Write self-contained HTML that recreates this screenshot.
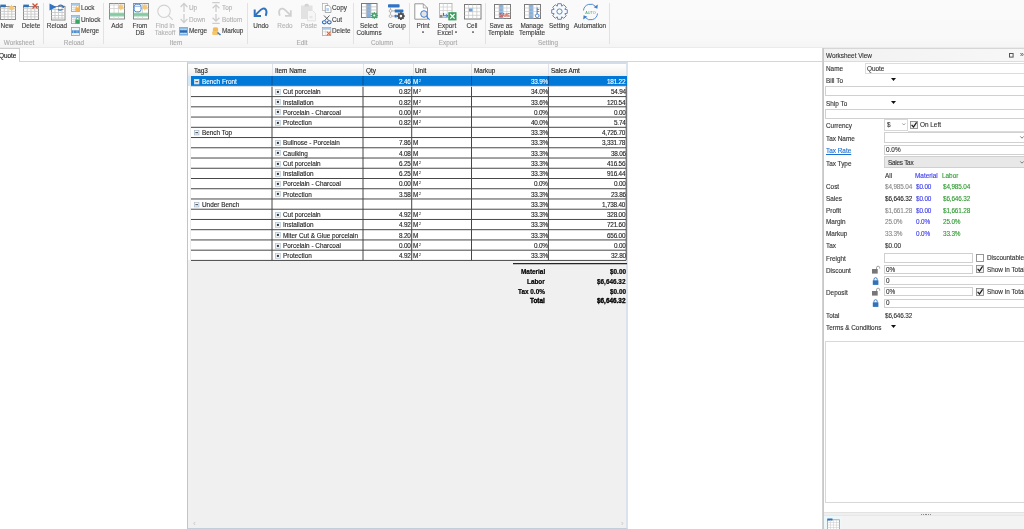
<!DOCTYPE html>
<html><head><meta charset="utf-8"><style>
html,body{margin:0;padding:0;width:1024px;height:529px;overflow:hidden;background:#fff;position:relative;font-family:"Liberation Sans",sans-serif;}
.a{position:absolute;}
.t{position:absolute;white-space:nowrap;will-change:transform;-webkit-text-stroke:0.12px currentColor;line-height:10px;height:10px;font-family:"Liberation Sans",sans-serif;}
sup{font-size:4.3px;vertical-align:0;position:relative;top:-1.8px;margin-left:0.3px;-webkit-text-stroke:0;}
svg{overflow:visible;}
</style></head><body>
<div class="a " style="left:0px;top:0px;width:1024px;height:47px;background:linear-gradient(#fafafa,#f9f9f9 80%,#f4f4f4);"></div>
<div class="a " style="left:0px;top:47px;width:1024px;height:1px;background:#ebebeb;"></div>
<div class="a " style="left:43px;top:3px;width:1px;height:41px;background:#e2e2e2;"></div>
<div class="a " style="left:103px;top:3px;width:1px;height:41px;background:#e2e2e2;"></div>
<div class="a " style="left:247px;top:3px;width:1px;height:41px;background:#e2e2e2;"></div>
<div class="a " style="left:353px;top:3px;width:1px;height:41px;background:#e2e2e2;"></div>
<div class="a " style="left:409px;top:3px;width:1px;height:41px;background:#e2e2e2;"></div>
<div class="a " style="left:485px;top:3px;width:1px;height:41px;background:#e2e2e2;"></div>
<div class="a " style="left:609px;top:3px;width:1px;height:41px;background:#e2e2e2;"></div>
<svg class="a" style="left:-0.5px;top:4.3px" width="17" height="17" viewBox="0 0 17 17"><rect x="0.5" y="2.5" width="15" height="13" fill="#fff" stroke="#8c8c8c" stroke-width="1"/><line x1="4.25" y1="2.5" x2="4.25" y2="15.5" stroke="#c8c8c8" stroke-width="0.9"/><line x1="8" y1="2.5" x2="8" y2="15.5" stroke="#c8c8c8" stroke-width="0.9"/><line x1="11.75" y1="2.5" x2="11.75" y2="15.5" stroke="#c8c8c8" stroke-width="0.9"/><line x1="0.5" y1="4.7" x2="15.5" y2="4.7" stroke="#c8c8c8" stroke-width="0.9"/><line x1="0.5" y1="7.4" x2="15.5" y2="7.4" stroke="#c8c8c8" stroke-width="0.9"/><line x1="0.5" y1="10.1" x2="15.5" y2="10.1" stroke="#c8c8c8" stroke-width="0.9"/><line x1="0.5" y1="12.8" x2="15.5" y2="12.8" stroke="#c8c8c8" stroke-width="0.9"/><rect x="0.3" y="0.6" width="5.6" height="2.6" fill="#2f70b8"/><g transform="translate(11.5 4)"><circle r="2.2" fill="#f3c777"/><path d="M0 -3.2v6.4M-3.2 0h6.4M-2.3 -2.3l4.6 4.6M2.3 -2.3l-4.6 4.6" stroke="#f3c777" stroke-width="0.9"/></g></svg>
<div class="t" style="left:-93px;width:200px;text-align:center;top:20.5px;color:#3c3c3c;font-size:6.4px;">New</div>
<svg class="a" style="left:22.5px;top:4.3px" width="17" height="17" viewBox="0 0 17 17"><rect x="0.5" y="2.5" width="15" height="13" fill="#fff" stroke="#8c8c8c" stroke-width="1"/><line x1="4.25" y1="2.5" x2="4.25" y2="15.5" stroke="#c8c8c8" stroke-width="0.9"/><line x1="8" y1="2.5" x2="8" y2="15.5" stroke="#c8c8c8" stroke-width="0.9"/><line x1="11.75" y1="2.5" x2="11.75" y2="15.5" stroke="#c8c8c8" stroke-width="0.9"/><line x1="0.5" y1="4.7" x2="15.5" y2="4.7" stroke="#c8c8c8" stroke-width="0.9"/><line x1="0.5" y1="7.4" x2="15.5" y2="7.4" stroke="#c8c8c8" stroke-width="0.9"/><line x1="0.5" y1="10.1" x2="15.5" y2="10.1" stroke="#c8c8c8" stroke-width="0.9"/><line x1="0.5" y1="12.8" x2="15.5" y2="12.8" stroke="#c8c8c8" stroke-width="0.9"/><rect x="0.3" y="0.6" width="5.6" height="2.6" fill="#2f70b8"/><path d="M9.5 -0.5l5 5M14.5 -0.5l-5 5" stroke="#dc4b30" stroke-width="1.3"/></svg>
<div class="t" style="left:-69.3px;width:200px;text-align:center;top:20.5px;color:#3c3c3c;font-size:6.4px;">Delete</div>
<div class="t" style="left:-81px;width:200px;text-align:center;top:37.5px;color:#ababab;font-size:6.4px;">Worksheet</div>
<svg class="a" style="left:51px;top:5.5px" width="15" height="15" viewBox="0 0 15 15"><rect x="0.5" y="0.5" width="13.5" height="13.5" fill="#fff" stroke="#8c8c8c" stroke-width="1"/><line x1="4" y1="0.5" x2="4" y2="14.0" stroke="#c8c8c8" stroke-width="0.9"/><line x1="7.5" y1="0.5" x2="7.5" y2="14.0" stroke="#c8c8c8" stroke-width="0.9"/><line x1="11" y1="0.5" x2="11" y2="14.0" stroke="#c8c8c8" stroke-width="0.9"/><line x1="0.5" y1="3.5" x2="14.0" y2="3.5" stroke="#c8c8c8" stroke-width="0.9"/><line x1="0.5" y1="6.5" x2="14.0" y2="6.5" stroke="#c8c8c8" stroke-width="0.9"/><line x1="0.5" y1="9.5" x2="14.0" y2="9.5" stroke="#c8c8c8" stroke-width="0.9"/><line x1="0.5" y1="12" x2="14.0" y2="12" stroke="#c8c8c8" stroke-width="0.9"/></svg>
<svg class="a" style="left:48.5px;top:3.3px" width="16" height="9" viewBox="0 0 16 9"><path d="M0.5 0.5L7.5 4L0.5 7.5z" fill="#2f73c4"/><path d="M9 3.5a3 2.6 0 0 1 5.5 0.5" stroke="#2f73c4" stroke-width="1.2" fill="none"/><path d="M15.3 2.5l-0.5 2.8-2.4-1.2z" fill="#2f73c4"/><path d="M13.5 6a3 2.6 0 0 1-4.5 0.5" stroke="#2f73c4" stroke-width="1.1" fill="none"/></svg>
<div class="t" style="left:-42.8px;width:200px;text-align:center;top:20.5px;color:#3c3c3c;font-size:6.4px;">Reload</div>
<svg class="a" style="left:70.8px;top:2.7px" width="9" height="9" viewBox="0 0 9 9"><rect x="0.5" y="0.5" width="8" height="8" fill="#fff" stroke="#999" stroke-width="0.8"/><rect x="0.5" y="0.5" width="8" height="2.2" fill="#a8c8e8"/><path d="M0.5 4.5h8M0.5 6.5h8M3 2.7v6M5.5 2.7v6" stroke="#ccc" stroke-width="0.6"/><rect x="4.3" y="4.6" width="4.2" height="4" fill="#f0b45a"/><path d="M5.2 4.6v-1a1.2 1.2 0 0 1 2.4 0v1" stroke="#f0b45a" stroke-width="0.7" fill="none"/></svg>
<div class="t" style="left:80.5px;top:2.5999999999999996px;color:#3c3c3c;font-size:6.4px;">Lock</div>
<svg class="a" style="left:70.8px;top:14.7px" width="9" height="9" viewBox="0 0 9 9"><rect x="0.5" y="0.5" width="8" height="8" fill="#fff" stroke="#999" stroke-width="0.8"/><rect x="0.5" y="0.5" width="8" height="2.2" fill="#a8c8e8"/><path d="M0.5 4.5h8M0.5 6.5h8M3 2.7v6M5.5 2.7v6" stroke="#ccc" stroke-width="0.6"/><rect x="4.3" y="4.6" width="4.2" height="4" fill="#3aa564"/><path d="M5.2 4.6v-1a1.2 1.2 0 0 1 2.4 0" stroke="#3aa564" stroke-width="0.7" fill="none"/></svg>
<div class="t" style="left:80.5px;top:14.5px;color:#3c3c3c;font-size:6.4px;">Unlock</div>
<svg class="a" style="left:70.8px;top:26.5px" width="9" height="9" viewBox="0 0 9 9"><rect x="0.5" y="0.5" width="8" height="8" fill="#f4f4f4" stroke="#999" stroke-width="0.8"/><rect x="0.8" y="3.3" width="7.5" height="2.8" fill="#4f8fd0"/><path d="M2.5 3.3v5M6 3.3v5" stroke="#ddd" stroke-width="0.5"/></svg>
<div class="t" style="left:80.5px;top:25.9px;color:#3c3c3c;font-size:6.4px;">Merge</div>
<div class="t" style="left:-25.700000000000003px;width:200px;text-align:center;top:37.5px;color:#ababab;font-size:6.4px;">Reload</div>
<svg class="a" style="left:109px;top:3.3px" width="17" height="17" viewBox="0 0 17 17"><rect x="0.5" y="0.5" width="15" height="15.5" fill="#fff" stroke="#8c8c8c"/><path d="M5 0.5v9.5M9.5 0.5v9.5M0.5 2h15M0.5 5.5h15" stroke="#d0d0d0" stroke-width="0.8"/><rect x="1" y="9.7" width="14" height="3.8" fill="#8fd1a9"/><path d="M0.5 11.6h15" stroke="#7cc199" stroke-width="0.6"/><path d="M5 13.5v2.5M9.5 13.5v2.5" stroke="#d0d0d0" stroke-width="0.8"/><g transform="translate(11.8 4.3)"><circle r="2.3" fill="#f5c67a"/><path d="M0 -3.2v6.4M-3.2 0h6.4M-2.2 -2.2l4.4 4.4M2.2 -2.2l-4.4 4.4" stroke="#f5c67a" stroke-width="0.8"/></g></svg>
<div class="t" style="left:17px;width:200px;text-align:center;top:20.5px;color:#3c3c3c;font-size:6.4px;">Add</div>
<svg class="a" style="left:133px;top:3.3px" width="17" height="17" viewBox="0 0 17 17"><rect x="0.5" y="0.5" width="15" height="15.5" fill="#fff" stroke="#8c8c8c"/><path d="M5 0.5v9.5M9.5 0.5v9.5M0.5 2h15M0.5 5.5h15" stroke="#d0d0d0" stroke-width="0.8"/><rect x="1" y="9.7" width="14" height="3.8" fill="#8fd1a9"/><path d="M0.5 11.6h15" stroke="#7cc199" stroke-width="0.6"/><path d="M5 13.5v2.5M9.5 13.5v2.5" stroke="#d0d0d0" stroke-width="0.8"/><g transform="translate(11.8 4.3)"><circle r="2.3" fill="#f5c67a"/><path d="M0 -3.2v6.4M-3.2 0h6.4M-2.2 -2.2l4.4 4.4M2.2 -2.2l-4.4 4.4" stroke="#f5c67a" stroke-width="0.8"/></g><rect x="1.2" y="1.3" width="6.8" height="7.5" rx="2.2" fill="#fff" stroke="#3f7fcf" stroke-width="0.9"/><path d="M1.6 3.3h6" stroke="#3f7fcf" stroke-width="0.6"/></svg>
<div class="t" style="left:39.80000000000001px;width:200px;text-align:center;top:20.5px;color:#3c3c3c;font-size:6.4px;">From</div>
<div class="t" style="left:39.80000000000001px;width:200px;text-align:center;top:27.5px;color:#3c3c3c;font-size:6.4px;">DB</div>
<svg class="a" style="left:155px;top:3px" width="19" height="18" viewBox="0 0 19 18"><circle cx="9" cy="8.3" r="6.2" fill="none" stroke="#d2d2d2" stroke-width="1.1"/><path d="M13.5 12.7l4.2 4.2" stroke="#d2d2d2" stroke-width="1.2"/></svg>
<div class="t" style="left:64.69999999999999px;width:200px;text-align:center;top:20.5px;color:#b4b4b4;font-size:6.4px;">Find in</div>
<div class="t" style="left:64.69999999999999px;width:200px;text-align:center;top:27.5px;color:#b4b4b4;font-size:6.4px;">Takeoff</div>
<svg class="a" style="left:179.5px;top:2.4000000000000004px" width="8" height="10" viewBox="0 0 8 10"><path d="M4 10V1.5M0.6 5L4 1.5L7.4 5" stroke="#cdcdcd" stroke-width="1.25" fill="none"/></svg>
<div class="t" style="left:188.6px;top:2.8px;color:#b4b4b4;font-size:6.4px;">Up</div>
<svg class="a" style="left:179.5px;top:14.399999999999999px" width="8" height="10" viewBox="0 0 8 10"><path d="M4 0V8.5M0.6 5L4 8.5L7.4 5" stroke="#cdcdcd" stroke-width="1.25" fill="none"/></svg>
<div class="t" style="left:188.6px;top:14.8px;color:#b4b4b4;font-size:6.4px;">Down</div>
<svg class="a" style="left:179px;top:26.8px" width="9" height="9" viewBox="0 0 9 9"><rect x="0" y="0" width="9" height="8.5" fill="#7fb2dc"/><path d="M1 2.2h7M1 6.5h7M3 2.5v4M6 2.5v4" stroke="#e8f2fa" stroke-width="0.6"/><rect x="1" y="3.3" width="7" height="2.3" fill="#2b6cb5"/></svg>
<div class="t" style="left:188.6px;top:26.2px;color:#3c3c3c;font-size:6.4px;">Merge</div>
<svg class="a" style="left:212.3px;top:2.4000000000000004px" width="8" height="10" viewBox="0 0 8 10"><path d="M4 10V2.8M0.6 6.3L4 2.8L7.4 6.3M0.3 0.7h7.4" stroke="#cdcdcd" stroke-width="1.25" fill="none"/></svg>
<div class="t" style="left:221.5px;top:2.8px;color:#b4b4b4;font-size:6.4px;">Top</div>
<svg class="a" style="left:212.3px;top:14.399999999999999px" width="8" height="10" viewBox="0 0 8 10"><path d="M4 0V7.2M0.6 3.7L4 7.2L7.4 3.7M0.3 9.3h7.4" stroke="#cdcdcd" stroke-width="1.25" fill="none"/></svg>
<div class="t" style="left:221.5px;top:14.8px;color:#b4b4b4;font-size:6.4px;">Bottom</div>
<svg class="a" style="left:212px;top:27px" width="10" height="9" viewBox="0 0 10 9"><ellipse cx="3.5" cy="1.6" rx="2.6" ry="1.3" fill="#f0bb55"/><rect x="0.9" y="1.6" width="5.2" height="3.2" fill="#f0bb55"/><rect x="0.2" y="4.3" width="6.2" height="3.6" rx="1" fill="#f5c76c"/><path d="M5.5 5.5l3 2.5" stroke="#3a78c4" stroke-width="1.6"/></svg>
<div class="t" style="left:221.5px;top:26.2px;color:#3c3c3c;font-size:6.4px;">Markup</div>
<div class="t" style="left:76px;width:200px;text-align:center;top:37.5px;color:#ababab;font-size:6.4px;">Item</div>
<svg class="a" style="left:250px;top:2px" width="20" height="18" viewBox="0 0 20 18"><path d="M5.2 13.2L9.6 8.9C11.6 6.6 14.2 5.6 15.8 7.6C17.1 9.3 16.6 11.6 15.7 13.8" stroke="#3173bd" stroke-width="1.9" fill="none"/><path d="M4.7 7.6V13.9H11" stroke="#3173bd" stroke-width="2" fill="none" stroke-linejoin="miter"/></svg>
<div class="t" style="left:161px;width:200px;text-align:center;top:20.5px;color:#3c3c3c;font-size:6.4px;">Undo</div>
<svg class="a" style="left:274px;top:2px" width="22" height="18" viewBox="0 0 22 18"><path d="M5.8 13.8C4.9 11.6 4.6 9.3 5.9 7.6C7.5 5.6 10.1 6.6 12.1 8.9L16.3 13.2" stroke="#d0d0d0" stroke-width="1.7" fill="none"/><path d="M16.8 8.2V13.9H11" stroke="#d0d0d0" stroke-width="1.8" fill="none"/></svg>
<div class="t" style="left:184.5px;width:200px;text-align:center;top:20.5px;color:#b4b4b4;font-size:6.4px;">Redo</div>
<svg class="a" style="left:300px;top:3px" width="17" height="18" viewBox="0 0 17 18"><rect x="1" y="2.5" width="11.5" height="13.5" fill="#e2e2e2"/><path d="M4.5 3.5v-1.2a2.2 1.5 0 0 1 4.4 0v1.2z" fill="#d4d4d4"/><path d="M7.5 7.5h5l3 3v7.3h-8z" fill="#f6f6f6" stroke="#dedede" stroke-width="0.8"/><rect x="9.5" y="13" width="3" height="2.2" fill="#e6e6e6"/></svg>
<div class="t" style="left:208.5px;width:200px;text-align:center;top:20.5px;color:#b4b4b4;font-size:6.4px;">Paste</div>
<svg class="a" style="left:322px;top:2.8px" width="10" height="10" viewBox="0 0 10 10"><rect x="0.5" y="0.5" width="4.8" height="7" fill="#fff" stroke="#aaa" stroke-width="0.7"/><path d="M3.3 2.5h3.5l2.2 2.2v4.8h-5.7z" fill="#fff" stroke="#8a8a8a" stroke-width="0.7"/><rect x="4.4" y="5" width="2.6" height="3" fill="#b7d3ef"/></svg>
<div class="t" style="left:332px;top:2.5999999999999996px;color:#3c3c3c;font-size:6.4px;">Copy</div>
<svg class="a" style="left:322px;top:14.5px" width="10" height="10" viewBox="0 0 10 10"><path d="M2 0.5l5 5.2M7.5 0.5L2.5 5.7" stroke="#4c4c4c" stroke-width="0.9"/><ellipse cx="2.3" cy="7.3" rx="1.9" ry="1.6" fill="none" stroke="#2f6fbf" stroke-width="1.1"/><ellipse cx="7.3" cy="7.3" rx="1.9" ry="1.6" fill="none" stroke="#2f6fbf" stroke-width="1.1"/></svg>
<div class="t" style="left:332px;top:14.7px;color:#3c3c3c;font-size:6.4px;">Cut</div>
<svg class="a" style="left:322px;top:26.8px" width="10" height="9" viewBox="0 0 10 9"><rect x="0.5" y="0.5" width="8.3" height="8" fill="#fff" stroke="#999" stroke-width="0.7"/><rect x="0.7" y="0.7" width="8" height="2" fill="#a8c8e8"/><path d="M0.5 4.8h8M3.3 2.7v6" stroke="#ccc" stroke-width="0.6"/><path d="M4.8 4.6l3.8 3.8M8.6 4.6l-3.8 3.8" stroke="#e8622f" stroke-width="1.1"/></svg>
<div class="t" style="left:332px;top:26.2px;color:#3c3c3c;font-size:6.4px;">Delete</div>
<div class="t" style="left:201.5px;width:200px;text-align:center;top:37.5px;color:#ababab;font-size:6.4px;">Edit</div>
<svg class="a" style="left:361px;top:3.3px" width="18" height="17" viewBox="0 0 18 17"><rect x="0.5" y="0.5" width="15.5" height="14" fill="#fff" stroke="#7a7a7a"/><rect x="5.3" y="1" width="4.6" height="13.5" fill="#86b0dc"/><path d="M5.3 1v14M10 1v14M1 3.8h15M1 7h15M1 10.2h15" stroke="#b8b8b8" stroke-width="0.7"/><g transform="translate(13.3 12.5)"><circle r="2.6" fill="#44a36a"/><path d="M0 -3.6v7.2M-3.6 0h7.2M-2.5 -2.5l5 5M2.5 -2.5l-5 5" stroke="#44a36a" stroke-width="1.1"/><circle r="1.1" fill="#fff"/></g></svg>
<div class="t" style="left:269px;width:200px;text-align:center;top:20.5px;color:#3c3c3c;font-size:6.4px;">Select</div>
<div class="t" style="left:269px;width:200px;text-align:center;top:27.5px;color:#3c3c3c;font-size:6.4px;">Columns</div>
<svg class="a" style="left:388px;top:3.5px" width="18" height="17" viewBox="0 0 18 17"><rect x="0" y="0.3" width="11.6" height="3.1" rx="0.7" fill="#2f73c4"/><rect x="6.6" y="5.5" width="8.8" height="2.9" rx="0.7" fill="#2f73c4"/><path d="M2.5 3.4v7.3M3.9 6.9h2.7M3.9 12.1h2.7" stroke="#9a9a9a" stroke-width="0.7"/><circle cx="2.5" cy="6.9" r="1.35" fill="#fff" stroke="#999" stroke-width="0.7"/><circle cx="2.5" cy="12.1" r="1.35" fill="#fff" stroke="#999" stroke-width="0.7"/><rect x="6.6" y="10.8" width="2.2" height="2.7" rx="0.5" fill="#2f73c4"/><g transform="translate(12.9 12.1)"><path d="M3.81 -0.81 L3.81 0.81 L2.68 1.11 L3.27 2.12 L2.12 3.27 L1.11 2.68 L0.81 3.81 L-0.81 3.81 L-1.11 2.68 L-2.12 3.27 L-3.27 2.12 L-2.68 1.11 L-3.81 0.81 L-3.81 -0.81 L-2.68 -1.11 L-3.27 -2.12 L-2.12 -3.27 L-1.11 -2.68 L-0.81 -3.81 L0.81 -3.81 L1.11 -2.68 L2.12 -3.27 L3.27 -2.12 L2.68 -1.11z" fill="#4f4f4f"/><circle r="1.3" fill="#fff"/></g></svg>
<div class="t" style="left:296.5px;width:200px;text-align:center;top:20.5px;color:#3c3c3c;font-size:6.4px;">Group</div>
<div class="t" style="left:282px;width:200px;text-align:center;top:37.5px;color:#ababab;font-size:6.4px;">Column</div>
<svg class="a" style="left:414px;top:3px" width="18" height="18" viewBox="0 0 18 18"><path d="M0.8 0.8h8.5l4.2 4.2v11.2H0.8z" fill="#fff" stroke="#8a8a8a" stroke-width="0.9"/><path d="M9.3 0.8v4.2h4.2" fill="none" stroke="#8a8a8a" stroke-width="0.7"/><circle cx="10" cy="11" r="3.3" fill="#e4e4e4" stroke="#3f7fcf" stroke-width="1"/><path d="M12.4 13.4l3.2 3.4" stroke="#3f7fcf" stroke-width="1.1"/></svg>
<div class="t" style="left:323px;width:200px;text-align:center;top:20.5px;color:#3c3c3c;font-size:6.4px;">Print</div>
<svg class="a" style="left:422.4px;top:31.4px" width="2" height="2" viewBox="0 0 2 2"><circle cx="1" cy="1" r="0.85" fill="#222"/></svg>
<svg class="a" style="left:439px;top:3px" width="18" height="18" viewBox="0 0 18 18"><rect x="0.5" y="0.5" width="12.5" height="14" fill="#fff" stroke="#aaa" stroke-width="0.8"/><path d="M4.3 0.5v14M8.3 0.5v14M0.5 4h12.5M0.5 7.5h12.5M0.5 11h12.5" stroke="#ccc" stroke-width="0.7"/><rect x="1" y="12" width="2.5" height="2.5" fill="#888"/><rect x="9.3" y="9.2" width="8.2" height="8.2" fill="#3a9d5e"/><path d="M11.2 11l4.4 4.6M15.6 11l-4.4 4.6" stroke="#fff" stroke-width="1.2"/><path d="M4.5 10v2.8h4.2M7.2 11.3l1.5 1.5-1.5 1.5" stroke="#2f73c4" stroke-width="1" fill="none"/></svg>
<div class="t" style="left:347px;width:200px;text-align:center;top:20.5px;color:#3c3c3c;font-size:6.4px;">Export</div>
<div class="t" style="left:345.3px;width:200px;text-align:center;top:27.5px;color:#3c3c3c;font-size:6.4px;">Excel</div>
<svg class="a" style="left:454.9px;top:31.4px" width="2" height="2" viewBox="0 0 2 2"><circle cx="1" cy="1" r="0.85" fill="#222"/></svg>
<svg class="a" style="left:463.5px;top:4.3px" width="18" height="16" viewBox="0 0 18 16"><rect x="0.5" y="0.5" width="16.5" height="14.5" fill="#fff" stroke="#7a7a7a"/><path d="M4.6 0.5v14.5M8.7 0.5v14.5M12.8 0.5v14.5M0.5 4.1h16.5M0.5 7.7h16.5M0.5 11.3h16.5" stroke="#c4c4c4" stroke-width="0.7"/><rect x="5" y="4.5" width="3.5" height="3" fill="#6a9fd8"/></svg>
<div class="t" style="left:372px;width:200px;text-align:center;top:20.5px;color:#3c3c3c;font-size:6.4px;">Cell</div>
<svg class="a" style="left:471.5px;top:31.4px" width="2" height="2" viewBox="0 0 2 2"><circle cx="1" cy="1" r="0.85" fill="#222"/></svg>
<div class="t" style="left:348px;width:200px;text-align:center;top:37.5px;color:#ababab;font-size:6.4px;">Export</div>
<svg class="a" style="left:493.5px;top:4.3px" width="17" height="15" viewBox="0 0 17 15"><rect x="0.5" y="0.5" width="16" height="14" fill="#fff" stroke="#7a7a7a"/><rect x="5" y="0.8" width="4.2" height="13.7" fill="#86b0dc"/><path d="M5 0.5v14M9.2 0.5v14M12.8 0.5v14M0.5 4h16M0.5 7.5h16M0.5 11h16" stroke="#c4c4c4" stroke-width="0.6"/><text x="5.2" y="13.2" font-size="4.6" fill="#d8412f" font-family="Liberation Sans" font-weight="bold" textLength="10.8" lengthAdjust="spacingAndGlyphs">SAVE</text></svg>
<div class="t" style="left:401px;width:200px;text-align:center;top:20.5px;color:#3c3c3c;font-size:6.4px;">Save as</div>
<div class="t" style="left:401px;width:200px;text-align:center;top:27.5px;color:#3c3c3c;font-size:6.4px;">Template</div>
<svg class="a" style="left:523.5px;top:4.3px" width="17" height="15" viewBox="0 0 17 15"><rect x="0.5" y="0.5" width="16" height="14" fill="#fff" stroke="#7a7a7a"/><rect x="5" y="0.8" width="4.2" height="13.7" fill="#86b0dc"/><path d="M5 0.5v14M9.2 0.5v14M12.8 0.5v14M0.5 4h16M0.5 7.5h16M0.5 11h16" stroke="#c4c4c4" stroke-width="0.6"/><circle cx="13.2" cy="11.8" r="1.8" fill="#fff" stroke="#3f7fcf" stroke-width="0.9"/><path d="M13.2 10V3.5M13.2 5.5h2M13.2 7.5h1.6" stroke="#3f7fcf" stroke-width="0.9"/></svg>
<div class="t" style="left:431.5px;width:200px;text-align:center;top:20.5px;color:#3c3c3c;font-size:6.4px;">Manage</div>
<div class="t" style="left:431.5px;width:200px;text-align:center;top:27.5px;color:#3c3c3c;font-size:6.4px;">Template</div>
<svg class="a" style="left:551px;top:3.2px" width="17" height="17" viewBox="0 0 17 17"><path d="M6.70 0.71 L10.30 0.71 L10.67 3.12 L10.77 3.16 L12.74 1.72 L15.28 4.26 L13.84 6.23 L13.88 6.33 L16.29 6.70 L16.29 10.30 L13.88 10.67 L13.84 10.77 L15.28 12.74 L12.74 15.28 L10.77 13.84 L10.67 13.88 L10.30 16.29 L6.70 16.29 L6.33 13.88 L6.23 13.84 L4.26 15.28 L1.72 12.74 L3.16 10.77 L3.12 10.67 L0.71 10.30 L0.71 6.70 L3.12 6.33 L3.16 6.23 L1.72 4.26 L4.26 1.72 L6.23 3.16 L6.33 3.12z" fill="none" stroke="#3f7fcf" stroke-width="0.9" stroke-linejoin="round"/><circle cx="8.5" cy="8.5" r="2.6" fill="none" stroke="#3f7fcf" stroke-width="0.9"/></svg>
<div class="t" style="left:459px;width:200px;text-align:center;top:20.5px;color:#3c3c3c;font-size:6.4px;">Setting</div>
<svg class="a" style="left:580.5px;top:2.8px" width="19" height="18" viewBox="0 0 19 18"><path d="M2.5 7.5A7 7 0 0 1 14.8 3.6" stroke="#3f7fcf" stroke-width="0.9" fill="none"/><path d="M16.5 10.5A7 7 0 0 1 4.2 14.4" stroke="#3f7fcf" stroke-width="0.9" fill="none"/><path d="M16.8 1.5l-0.4 4.3-3.7-1.6z" fill="#3f7fcf"/><path d="M2.2 16.5l0.4-4.3 3.7 1.6z" fill="#3f7fcf"/><text x="4.2" y="10.6" font-size="4.4" fill="#44a36a" font-family="Liberation Sans" textLength="10.5" lengthAdjust="spacingAndGlyphs">AUTO</text></svg>
<div class="t" style="left:489.6px;width:200px;text-align:center;top:20.5px;color:#3c3c3c;font-size:6.4px;">Automation</div>
<div class="t" style="left:448px;width:200px;text-align:center;top:37.5px;color:#ababab;font-size:6.4px;">Setting</div>
<div class="a " style="left:0px;top:48px;width:1024px;height:14px;background:#fff;"></div>
<div class="a " style="left:0px;top:48px;width:19.5px;height:1px;background:#d0d0d0;"></div>
<div class="a " style="left:19px;top:48px;width:1px;height:14px;background:#cfcfcf;"></div>
<div class="a " style="left:19px;top:61px;width:803px;height:1px;background:#d6d6d6;"></div>
<div class="t" style="left:-1px;top:50.8px;color:#111;font-size:6.4px;">Quote</div>
<div class="a " style="left:187px;top:62px;width:441px;height:467px;background:#f0f0f0;box-sizing:border-box;border:1px solid #b9c6d4;border-top:2px solid #d3dde8;border-right:2px solid #dae2eb;border-bottom:1px solid #c2ceda;"></div>
<div class="a " style="left:188px;top:64px;width:438px;height:12px;background:linear-gradient(#ffffff,#f6f6f7 55%,#ededee);"></div>
<div class="a " style="left:188px;top:76px;width:3px;height:184px;background:#fff;"></div>
<div class="a " style="left:188px;top:76px;width:3px;height:10px;background:#d2e9f8;"></div>
<div class="a " style="left:190px;top:86px;width:1px;height:174px;background:#ececec;"></div>
<div class="t" style="left:193.8px;top:66.0px;color:#222;font-size:6.4px;">Tag3</div>
<div class="t" style="left:274.8px;top:66.0px;color:#222;font-size:6.4px;">Item Name</div>
<div class="t" style="left:365.8px;top:66.0px;color:#222;font-size:6.4px;">Qty</div>
<div class="t" style="left:414.8px;top:66.0px;color:#222;font-size:6.4px;">Unit</div>
<div class="t" style="left:473.8px;top:66.0px;color:#222;font-size:6.4px;">Markup</div>
<div class="t" style="left:550.8px;top:66.0px;color:#222;font-size:6.4px;">Sales Amt</div>
<div class="a " style="left:272px;top:64px;width:1px;height:12px;background:#dfe3e8;"></div>
<div class="a " style="left:363px;top:64px;width:1px;height:12px;background:#dfe3e8;"></div>
<div class="a " style="left:413px;top:64px;width:1px;height:12px;background:#dfe3e8;"></div>
<div class="a " style="left:471px;top:64px;width:1px;height:12px;background:#dfe3e8;"></div>
<div class="a " style="left:548px;top:64px;width:1px;height:12px;background:#dfe3e8;"></div>
<div class="a " style="left:191px;top:76px;width:435px;height:184px;background:#fff;"></div>
<div class="a " style="left:191px;top:76px;width:436px;height:10px;background:#0078d7;"></div>
<svg class="a" style="left:193.6px;top:79.10000000000001px" width="6" height="6" viewBox="0 0 6 6"><rect x="0.5" y="0.5" width="4.4" height="4.4" fill="#ececec" stroke="#dfe4ea" stroke-width="0.8"/><path d="M1.4 2.7h2.6" stroke="#5a4a30" stroke-width="1"/></svg>
<div class="t" style="left:201.5px;top:77.02000000000001px;color:#fff;font-size:6.4px;">Bench Front</div>
<div class="t" style="right:613.0px;top:77.02000000000001px;color:#fff;font-size:6.4px;letter-spacing:-0.22px;">2.46</div>
<div class="t" style="left:413px;top:77.02000000000001px;color:#fff;font-size:6.4px;">M<sup>2</sup></div>
<div class="t" style="right:476.29999999999995px;top:77.02000000000001px;color:#fff;font-size:6.4px;letter-spacing:-0.22px;">33.9%</div>
<div class="t" style="right:398.4px;top:77.02000000000001px;color:#fff;font-size:6.4px;letter-spacing:-0.22px;">181.22</div>
<svg class="a" style="left:275.3px;top:88.94px" width="6" height="6" viewBox="0 0 6 6"><rect x="0.5" y="0.5" width="4.8" height="4.8" fill="#f2f5f8" stroke="#b4c6d8" stroke-width="0.8"/><rect x="1.9" y="1.9" width="2" height="2" fill="#333"/></svg>
<div class="t" style="left:283px;top:87.26px;color:#1e1e1e;font-size:6.4px;">Cut porcelain</div>
<div class="t" style="right:613.0px;top:87.26px;color:#1e1e1e;font-size:6.4px;letter-spacing:-0.22px;">0.82</div>
<div class="t" style="left:413px;top:87.26px;color:#1e1e1e;font-size:6.4px;">M<sup>2</sup></div>
<div class="t" style="right:476.29999999999995px;top:87.26px;color:#1e1e1e;font-size:6.4px;letter-spacing:-0.22px;">34.0%</div>
<div class="t" style="right:398.4px;top:87.26px;color:#1e1e1e;font-size:6.4px;letter-spacing:-0.22px;">54.94</div>
<svg class="a" style="left:275.3px;top:99.18px" width="6" height="6" viewBox="0 0 6 6"><rect x="0.5" y="0.5" width="4.8" height="4.8" fill="#f2f5f8" stroke="#b4c6d8" stroke-width="0.8"/><rect x="1.9" y="1.9" width="2" height="2" fill="#333"/></svg>
<div class="t" style="left:283px;top:97.5px;color:#1e1e1e;font-size:6.4px;">Installation</div>
<div class="t" style="right:613.0px;top:97.5px;color:#1e1e1e;font-size:6.4px;letter-spacing:-0.22px;">0.82</div>
<div class="t" style="left:413px;top:97.5px;color:#1e1e1e;font-size:6.4px;">M<sup>2</sup></div>
<div class="t" style="right:476.29999999999995px;top:97.5px;color:#1e1e1e;font-size:6.4px;letter-spacing:-0.22px;">33.6%</div>
<div class="t" style="right:398.4px;top:97.5px;color:#1e1e1e;font-size:6.4px;letter-spacing:-0.22px;">120.54</div>
<svg class="a" style="left:275.3px;top:109.42px" width="6" height="6" viewBox="0 0 6 6"><rect x="0.5" y="0.5" width="4.8" height="4.8" fill="#f2f5f8" stroke="#b4c6d8" stroke-width="0.8"/><rect x="1.9" y="1.9" width="2" height="2" fill="#333"/></svg>
<div class="t" style="left:283px;top:107.74000000000001px;color:#1e1e1e;font-size:6.4px;">Porcelain - Charcoal</div>
<div class="t" style="right:613.0px;top:107.74000000000001px;color:#1e1e1e;font-size:6.4px;letter-spacing:-0.22px;">0.00</div>
<div class="t" style="left:413px;top:107.74000000000001px;color:#1e1e1e;font-size:6.4px;">M<sup>2</sup></div>
<div class="t" style="right:476.29999999999995px;top:107.74000000000001px;color:#1e1e1e;font-size:6.4px;letter-spacing:-0.22px;">0.0%</div>
<div class="t" style="right:398.4px;top:107.74000000000001px;color:#1e1e1e;font-size:6.4px;letter-spacing:-0.22px;">0.00</div>
<svg class="a" style="left:275.3px;top:119.66000000000001px" width="6" height="6" viewBox="0 0 6 6"><rect x="0.5" y="0.5" width="4.8" height="4.8" fill="#f2f5f8" stroke="#b4c6d8" stroke-width="0.8"/><rect x="1.9" y="1.9" width="2" height="2" fill="#333"/></svg>
<div class="t" style="left:283px;top:117.98000000000002px;color:#1e1e1e;font-size:6.4px;">Protection</div>
<div class="t" style="right:613.0px;top:117.98000000000002px;color:#1e1e1e;font-size:6.4px;letter-spacing:-0.22px;">0.82</div>
<div class="t" style="left:413px;top:117.98000000000002px;color:#1e1e1e;font-size:6.4px;">M<sup>2</sup></div>
<div class="t" style="right:476.29999999999995px;top:117.98000000000002px;color:#1e1e1e;font-size:6.4px;letter-spacing:-0.22px;">40.0%</div>
<div class="t" style="right:398.4px;top:117.98000000000002px;color:#1e1e1e;font-size:6.4px;letter-spacing:-0.22px;">5.74</div>
<svg class="a" style="left:193.6px;top:130.3px" width="6" height="6" viewBox="0 0 6 6"><rect x="0.5" y="0.5" width="4.4" height="4.4" fill="#f4f6f8" stroke="#a8bccf" stroke-width="0.8"/><path d="M1.4 2.7h2.6" stroke="#3a3a3a" stroke-width="1"/></svg>
<div class="t" style="left:201.5px;top:128.22px;color:#1e1e1e;font-size:6.4px;">Bench Top</div>
<div class="t" style="right:476.29999999999995px;top:128.22px;color:#1e1e1e;font-size:6.4px;letter-spacing:-0.22px;">33.3%</div>
<div class="t" style="right:398.4px;top:128.22px;color:#1e1e1e;font-size:6.4px;letter-spacing:-0.22px;">4,726.70</div>
<svg class="a" style="left:275.3px;top:140.14000000000001px" width="6" height="6" viewBox="0 0 6 6"><rect x="0.5" y="0.5" width="4.8" height="4.8" fill="#f2f5f8" stroke="#b4c6d8" stroke-width="0.8"/><rect x="1.9" y="1.9" width="2" height="2" fill="#333"/></svg>
<div class="t" style="left:283px;top:138.46px;color:#1e1e1e;font-size:6.4px;">Bullnose - Porcelain</div>
<div class="t" style="right:613.0px;top:138.46px;color:#1e1e1e;font-size:6.4px;letter-spacing:-0.22px;">7.86</div>
<div class="t" style="left:413px;top:138.46px;color:#1e1e1e;font-size:6.4px;">M</div>
<div class="t" style="right:476.29999999999995px;top:138.46px;color:#1e1e1e;font-size:6.4px;letter-spacing:-0.22px;">33.3%</div>
<div class="t" style="right:398.4px;top:138.46px;color:#1e1e1e;font-size:6.4px;letter-spacing:-0.22px;">3,331.78</div>
<svg class="a" style="left:275.3px;top:150.38000000000002px" width="6" height="6" viewBox="0 0 6 6"><rect x="0.5" y="0.5" width="4.8" height="4.8" fill="#f2f5f8" stroke="#b4c6d8" stroke-width="0.8"/><rect x="1.9" y="1.9" width="2" height="2" fill="#333"/></svg>
<div class="t" style="left:283px;top:148.7px;color:#1e1e1e;font-size:6.4px;">Caulking</div>
<div class="t" style="right:613.0px;top:148.7px;color:#1e1e1e;font-size:6.4px;letter-spacing:-0.22px;">4.08</div>
<div class="t" style="left:413px;top:148.7px;color:#1e1e1e;font-size:6.4px;">M</div>
<div class="t" style="right:476.29999999999995px;top:148.7px;color:#1e1e1e;font-size:6.4px;letter-spacing:-0.22px;">33.3%</div>
<div class="t" style="right:398.4px;top:148.7px;color:#1e1e1e;font-size:6.4px;letter-spacing:-0.22px;">38.06</div>
<svg class="a" style="left:275.3px;top:160.62px" width="6" height="6" viewBox="0 0 6 6"><rect x="0.5" y="0.5" width="4.8" height="4.8" fill="#f2f5f8" stroke="#b4c6d8" stroke-width="0.8"/><rect x="1.9" y="1.9" width="2" height="2" fill="#333"/></svg>
<div class="t" style="left:283px;top:158.94px;color:#1e1e1e;font-size:6.4px;">Cut porcelain</div>
<div class="t" style="right:613.0px;top:158.94px;color:#1e1e1e;font-size:6.4px;letter-spacing:-0.22px;">6.25</div>
<div class="t" style="left:413px;top:158.94px;color:#1e1e1e;font-size:6.4px;">M<sup>2</sup></div>
<div class="t" style="right:476.29999999999995px;top:158.94px;color:#1e1e1e;font-size:6.4px;letter-spacing:-0.22px;">33.3%</div>
<div class="t" style="right:398.4px;top:158.94px;color:#1e1e1e;font-size:6.4px;letter-spacing:-0.22px;">416.56</div>
<svg class="a" style="left:275.3px;top:170.86px" width="6" height="6" viewBox="0 0 6 6"><rect x="0.5" y="0.5" width="4.8" height="4.8" fill="#f2f5f8" stroke="#b4c6d8" stroke-width="0.8"/><rect x="1.9" y="1.9" width="2" height="2" fill="#333"/></svg>
<div class="t" style="left:283px;top:169.18px;color:#1e1e1e;font-size:6.4px;">Installation</div>
<div class="t" style="right:613.0px;top:169.18px;color:#1e1e1e;font-size:6.4px;letter-spacing:-0.22px;">6.25</div>
<div class="t" style="left:413px;top:169.18px;color:#1e1e1e;font-size:6.4px;">M<sup>2</sup></div>
<div class="t" style="right:476.29999999999995px;top:169.18px;color:#1e1e1e;font-size:6.4px;letter-spacing:-0.22px;">33.3%</div>
<div class="t" style="right:398.4px;top:169.18px;color:#1e1e1e;font-size:6.4px;letter-spacing:-0.22px;">916.44</div>
<svg class="a" style="left:275.3px;top:181.10000000000002px" width="6" height="6" viewBox="0 0 6 6"><rect x="0.5" y="0.5" width="4.8" height="4.8" fill="#f2f5f8" stroke="#b4c6d8" stroke-width="0.8"/><rect x="1.9" y="1.9" width="2" height="2" fill="#333"/></svg>
<div class="t" style="left:283px;top:179.42000000000002px;color:#1e1e1e;font-size:6.4px;">Porcelain - Charcoal</div>
<div class="t" style="right:613.0px;top:179.42000000000002px;color:#1e1e1e;font-size:6.4px;letter-spacing:-0.22px;">0.00</div>
<div class="t" style="left:413px;top:179.42000000000002px;color:#1e1e1e;font-size:6.4px;">M<sup>2</sup></div>
<div class="t" style="right:476.29999999999995px;top:179.42000000000002px;color:#1e1e1e;font-size:6.4px;letter-spacing:-0.22px;">0.0%</div>
<div class="t" style="right:398.4px;top:179.42000000000002px;color:#1e1e1e;font-size:6.4px;letter-spacing:-0.22px;">0.00</div>
<svg class="a" style="left:275.3px;top:191.34000000000003px" width="6" height="6" viewBox="0 0 6 6"><rect x="0.5" y="0.5" width="4.8" height="4.8" fill="#f2f5f8" stroke="#b4c6d8" stroke-width="0.8"/><rect x="1.9" y="1.9" width="2" height="2" fill="#333"/></svg>
<div class="t" style="left:283px;top:189.66000000000003px;color:#1e1e1e;font-size:6.4px;">Protection</div>
<div class="t" style="right:613.0px;top:189.66000000000003px;color:#1e1e1e;font-size:6.4px;letter-spacing:-0.22px;">3.58</div>
<div class="t" style="left:413px;top:189.66000000000003px;color:#1e1e1e;font-size:6.4px;">M<sup>2</sup></div>
<div class="t" style="right:476.29999999999995px;top:189.66000000000003px;color:#1e1e1e;font-size:6.4px;letter-spacing:-0.22px;">33.3%</div>
<div class="t" style="right:398.4px;top:189.66000000000003px;color:#1e1e1e;font-size:6.4px;letter-spacing:-0.22px;">23.86</div>
<svg class="a" style="left:193.6px;top:201.98px" width="6" height="6" viewBox="0 0 6 6"><rect x="0.5" y="0.5" width="4.4" height="4.4" fill="#f4f6f8" stroke="#a8bccf" stroke-width="0.8"/><path d="M1.4 2.7h2.6" stroke="#3a3a3a" stroke-width="1"/></svg>
<div class="t" style="left:201.5px;top:199.9px;color:#1e1e1e;font-size:6.4px;">Under Bench</div>
<div class="t" style="right:476.29999999999995px;top:199.9px;color:#1e1e1e;font-size:6.4px;letter-spacing:-0.22px;">33.3%</div>
<div class="t" style="right:398.4px;top:199.9px;color:#1e1e1e;font-size:6.4px;letter-spacing:-0.22px;">1,738.40</div>
<svg class="a" style="left:275.3px;top:211.82000000000002px" width="6" height="6" viewBox="0 0 6 6"><rect x="0.5" y="0.5" width="4.8" height="4.8" fill="#f2f5f8" stroke="#b4c6d8" stroke-width="0.8"/><rect x="1.9" y="1.9" width="2" height="2" fill="#333"/></svg>
<div class="t" style="left:283px;top:210.14000000000001px;color:#1e1e1e;font-size:6.4px;">Cut porcelain</div>
<div class="t" style="right:613.0px;top:210.14000000000001px;color:#1e1e1e;font-size:6.4px;letter-spacing:-0.22px;">4.92</div>
<div class="t" style="left:413px;top:210.14000000000001px;color:#1e1e1e;font-size:6.4px;">M<sup>2</sup></div>
<div class="t" style="right:476.29999999999995px;top:210.14000000000001px;color:#1e1e1e;font-size:6.4px;letter-spacing:-0.22px;">33.3%</div>
<div class="t" style="right:398.4px;top:210.14000000000001px;color:#1e1e1e;font-size:6.4px;letter-spacing:-0.22px;">328.00</div>
<svg class="a" style="left:275.3px;top:222.06000000000003px" width="6" height="6" viewBox="0 0 6 6"><rect x="0.5" y="0.5" width="4.8" height="4.8" fill="#f2f5f8" stroke="#b4c6d8" stroke-width="0.8"/><rect x="1.9" y="1.9" width="2" height="2" fill="#333"/></svg>
<div class="t" style="left:283px;top:220.38px;color:#1e1e1e;font-size:6.4px;">Installation</div>
<div class="t" style="right:613.0px;top:220.38px;color:#1e1e1e;font-size:6.4px;letter-spacing:-0.22px;">4.92</div>
<div class="t" style="left:413px;top:220.38px;color:#1e1e1e;font-size:6.4px;">M<sup>2</sup></div>
<div class="t" style="right:476.29999999999995px;top:220.38px;color:#1e1e1e;font-size:6.4px;letter-spacing:-0.22px;">33.3%</div>
<div class="t" style="right:398.4px;top:220.38px;color:#1e1e1e;font-size:6.4px;letter-spacing:-0.22px;">721.60</div>
<svg class="a" style="left:275.3px;top:232.3px" width="6" height="6" viewBox="0 0 6 6"><rect x="0.5" y="0.5" width="4.8" height="4.8" fill="#f2f5f8" stroke="#b4c6d8" stroke-width="0.8"/><rect x="1.9" y="1.9" width="2" height="2" fill="#333"/></svg>
<div class="t" style="left:283px;top:230.62px;color:#1e1e1e;font-size:6.4px;">Miter Cut & Glue porcelain</div>
<div class="t" style="right:613.0px;top:230.62px;color:#1e1e1e;font-size:6.4px;letter-spacing:-0.22px;">8.20</div>
<div class="t" style="left:413px;top:230.62px;color:#1e1e1e;font-size:6.4px;">M</div>
<div class="t" style="right:476.29999999999995px;top:230.62px;color:#1e1e1e;font-size:6.4px;letter-spacing:-0.22px;">33.3%</div>
<div class="t" style="right:398.4px;top:230.62px;color:#1e1e1e;font-size:6.4px;letter-spacing:-0.22px;">656.00</div>
<svg class="a" style="left:275.3px;top:242.54000000000002px" width="6" height="6" viewBox="0 0 6 6"><rect x="0.5" y="0.5" width="4.8" height="4.8" fill="#f2f5f8" stroke="#b4c6d8" stroke-width="0.8"/><rect x="1.9" y="1.9" width="2" height="2" fill="#333"/></svg>
<div class="t" style="left:283px;top:240.86px;color:#1e1e1e;font-size:6.4px;">Porcelain - Charcoal</div>
<div class="t" style="right:613.0px;top:240.86px;color:#1e1e1e;font-size:6.4px;letter-spacing:-0.22px;">0.00</div>
<div class="t" style="left:413px;top:240.86px;color:#1e1e1e;font-size:6.4px;">M<sup>2</sup></div>
<div class="t" style="right:476.29999999999995px;top:240.86px;color:#1e1e1e;font-size:6.4px;letter-spacing:-0.22px;">0.0%</div>
<div class="t" style="right:398.4px;top:240.86px;color:#1e1e1e;font-size:6.4px;letter-spacing:-0.22px;">0.00</div>
<svg class="a" style="left:275.3px;top:252.78000000000003px" width="6" height="6" viewBox="0 0 6 6"><rect x="0.5" y="0.5" width="4.8" height="4.8" fill="#f2f5f8" stroke="#b4c6d8" stroke-width="0.8"/><rect x="1.9" y="1.9" width="2" height="2" fill="#333"/></svg>
<div class="t" style="left:283px;top:251.10000000000002px;color:#1e1e1e;font-size:6.4px;">Protection</div>
<div class="t" style="right:613.0px;top:251.10000000000002px;color:#1e1e1e;font-size:6.4px;letter-spacing:-0.22px;">4.92</div>
<div class="t" style="left:413px;top:251.10000000000002px;color:#1e1e1e;font-size:6.4px;">M<sup>2</sup></div>
<div class="t" style="right:476.29999999999995px;top:251.10000000000002px;color:#1e1e1e;font-size:6.4px;letter-spacing:-0.22px;">33.3%</div>
<div class="t" style="right:398.4px;top:251.10000000000002px;color:#1e1e1e;font-size:6.4px;letter-spacing:-0.22px;">32.80</div>
<svg class="a" style="left:0;top:0" width="1024" height="529"><line x1="191" y1="96.58" x2="626" y2="96.58" stroke="#474747" stroke-width="1"/><line x1="191" y1="106.82" x2="626" y2="106.82" stroke="#474747" stroke-width="1"/><line x1="191" y1="117.06" x2="626" y2="117.06" stroke="#474747" stroke-width="1"/><line x1="191" y1="127.30" x2="626" y2="127.30" stroke="#474747" stroke-width="1"/><line x1="191" y1="137.54" x2="626" y2="137.54" stroke="#474747" stroke-width="1"/><line x1="191" y1="147.78" x2="626" y2="147.78" stroke="#474747" stroke-width="1"/><line x1="191" y1="158.02" x2="626" y2="158.02" stroke="#474747" stroke-width="1"/><line x1="191" y1="168.26" x2="626" y2="168.26" stroke="#474747" stroke-width="1"/><line x1="191" y1="178.50" x2="626" y2="178.50" stroke="#474747" stroke-width="1"/><line x1="191" y1="188.74" x2="626" y2="188.74" stroke="#474747" stroke-width="1"/><line x1="191" y1="198.98" x2="626" y2="198.98" stroke="#474747" stroke-width="1"/><line x1="191" y1="209.22" x2="626" y2="209.22" stroke="#474747" stroke-width="1"/><line x1="191" y1="219.46" x2="626" y2="219.46" stroke="#474747" stroke-width="1"/><line x1="191" y1="229.70" x2="626" y2="229.70" stroke="#474747" stroke-width="1"/><line x1="191" y1="239.94" x2="626" y2="239.94" stroke="#474747" stroke-width="1"/><line x1="191" y1="250.18" x2="626" y2="250.18" stroke="#474747" stroke-width="1"/><line x1="191" y1="260.42" x2="626" y2="260.42" stroke="#474747" stroke-width="1"/><line x1="272.0" y1="86.1" x2="272.0" y2="260.22" stroke="#474747" stroke-width="1"/><line x1="272.0" y1="76" x2="272.0" y2="86.1" stroke="#0b4f8f" stroke-width="1"/><line x1="363.0" y1="86.1" x2="363.0" y2="260.22" stroke="#474747" stroke-width="1"/><line x1="363.0" y1="76" x2="363.0" y2="86.1" stroke="#0b4f8f" stroke-width="1"/><line x1="411.7" y1="86.1" x2="411.7" y2="260.22" stroke="#474747" stroke-width="1"/><line x1="411.7" y1="76" x2="411.7" y2="86.1" stroke="#0b4f8f" stroke-width="1"/><line x1="471.5" y1="86.1" x2="471.5" y2="260.22" stroke="#474747" stroke-width="1"/><line x1="471.5" y1="76" x2="471.5" y2="86.1" stroke="#0b4f8f" stroke-width="1"/><line x1="548.4" y1="86.1" x2="548.4" y2="260.22" stroke="#474747" stroke-width="1"/><line x1="548.4" y1="76" x2="548.4" y2="86.1" stroke="#0b4f8f" stroke-width="1"/><line x1="626.2" y1="86" x2="626.2" y2="260.22" stroke="#474747" stroke-width="1"/><line x1="191" y1="86.34" x2="626" y2="86.34" stroke="#c8d4e0" stroke-width="1"/></svg>
<svg class="a" style="left:0;top:0" width="1024" height="529"><line x1="513" y1="263.6" x2="627" y2="263.6" stroke="#262626" stroke-width="1.3"/></svg>
<div class="t" style="right:479px;top:266.6px;color:#000;font-size:6.4px;font-weight:bold;-webkit-text-stroke:0.2px #000;">Material</div>
<div class="t" style="right:398.5px;top:266.6px;color:#000;font-size:6.4px;font-weight:bold;-webkit-text-stroke:0.2px #000;">$0.00</div>
<div class="t" style="right:479px;top:276.9px;color:#000;font-size:6.4px;font-weight:bold;-webkit-text-stroke:0.2px #000;">Labor</div>
<div class="t" style="right:398.5px;top:276.9px;color:#000;font-size:6.4px;font-weight:bold;-webkit-text-stroke:0.2px #000;">$6,646.32</div>
<div class="t" style="right:479px;top:286.6px;color:#000;font-size:6.4px;font-weight:bold;-webkit-text-stroke:0.2px #000;">Tax 0.0%</div>
<div class="t" style="right:398.5px;top:286.6px;color:#000;font-size:6.4px;font-weight:bold;-webkit-text-stroke:0.2px #000;">$0.00</div>
<div class="t" style="right:479px;top:296.2px;color:#000;font-size:6.4px;font-weight:bold;-webkit-text-stroke:0.35px #000;">Total</div>
<div class="t" style="right:398.5px;top:296.2px;color:#000;font-size:6.4px;font-weight:bold;-webkit-text-stroke:0.35px #000;">$6,646.32</div>
<div class="t" style="left:193px;top:519.0px;color:#ccc;font-size:8px;">‹</div>
<div class="t" style="right:400px;top:519.0px;color:#cfcfcf;font-size:8px;">›</div>
<div class="a " style="left:822px;top:48px;width:202px;height:481px;background:#fff;"></div>
<div class="a " style="left:821.5px;top:48px;width:2.5px;height:481px;background:linear-gradient(90deg,#d6d6d6,#c4c4c4);"></div>
<div class="a " style="left:824px;top:48px;width:200px;height:1px;background:#d6d6d6;"></div>
<div class="a " style="left:824px;top:49px;width:200px;height:12px;background:linear-gradient(90deg,#f2f2f2,#f7f7f7);"></div>
<div class="a " style="left:824px;top:61px;width:200px;height:1px;background:#dcdcdc;"></div>
<div class="t" style="left:826.2px;top:50.6px;color:#333;font-size:6.4px;">Worksheet View</div>
<svg class="a" style="left:1009px;top:53px" width="5" height="5" viewBox="0 0 5 5"><rect x="0.5" y="0.5" width="3.6" height="3.6" fill="none" stroke="#555" stroke-width="1"/></svg>
<div class="t" style="left:1019.8px;top:50.2px;color:#666;font-size:7px;">»</div>
<div class="t" style="left:826px;top:63.8px;color:#333;font-size:6.4px;">Name</div>
<div class="a " style="left:865px;top:62.5px;width:165px;height:11.0px;background:#fff;box-sizing:border-box;border:1px solid #dcdcdc;"></div>
<div class="t" style="left:867px;top:63.599999999999994px;color:#333;font-size:6.4px;">Quote</div>
<div class="t" style="left:826px;top:75.5px;color:#333;font-size:6.4px;">Bill To</div>
<svg class="a" style="left:891px;top:78.1px" width="5" height="3" viewBox="0 0 5 3"><path d="M0 0h5L2.5 3z" fill="#111"/></svg>
<div class="a " style="left:825px;top:86px;width:205px;height:10px;background:#fff;box-sizing:border-box;border:1px solid #d0d0d0;"></div>
<div class="t" style="left:826px;top:98.9px;color:#333;font-size:6.4px;">Ship To</div>
<svg class="a" style="left:891px;top:100.9px" width="5" height="3" viewBox="0 0 5 3"><path d="M0 0h5L2.5 3z" fill="#111"/></svg>
<div class="a " style="left:825px;top:109px;width:205px;height:10px;background:#fff;box-sizing:border-box;border:1px solid #d0d0d0;"></div>
<div class="t" style="left:826px;top:121.0px;color:#333;font-size:6.4px;">Currency</div>
<div class="a " style="left:884px;top:119px;width:24px;height:12px;background:#fff;box-sizing:border-box;border:1px solid #d8d8d8;"></div>
<div class="t" style="left:887px;top:120.0px;color:#333;font-size:6.4px;">$</div>
<svg class="a" style="left:902.3px;top:123.3px" width="4" height="3" viewBox="0 0 4 3"><path d="M0.3 0.4l1.5 1.6 1.5-1.6" stroke="#8a8a8a" stroke-width="0.8" fill="none"/></svg>
<div class="a " style="left:908px;top:131px;width:116px;height:1px;background:#dcdcdc;"></div>
<svg class="a" style="left:909.5px;top:121px" width="8" height="8" viewBox="0 0 8 8"><rect x="0.5" y="0.5" width="7" height="7" fill="#f2f2f2" stroke="#8c8c8c" stroke-width="0.9"/><path d="M1.6 3.9l1.9 2.1 3.1-4.6" stroke="#1a1a1a" stroke-width="1.25" fill="none"/></svg>
<div class="t" style="left:919.5px;top:120.0px;color:#333;font-size:6.4px;">On Left</div>
<div class="t" style="left:826px;top:134.0px;color:#333;font-size:6.4px;">Tax Name</div>
<div class="a " style="left:884px;top:132px;width:146px;height:11px;background:#fff;box-sizing:border-box;border:1px solid #d0d0d0;"></div>
<svg class="a" style="left:1019.8px;top:135.6px" width="4" height="3" viewBox="0 0 4 3"><path d="M0.3 0.4l1.7 1.8 1.7-1.8" stroke="#707070" stroke-width="0.9" fill="none"/></svg>
<div class="t" style="left:826px;top:146.2px;color:#1a6fd0;font-size:6.4px;"><u>Tax Rate</u></div>
<div class="a " style="left:884px;top:145px;width:146px;height:10px;background:#fff;box-sizing:border-box;border:1px solid #d0d0d0;"></div>
<div class="t" style="left:886px;top:145.0px;color:#333;font-size:6.4px;">0.0%</div>
<div class="t" style="left:826px;top:158.6px;color:#333;font-size:6.4px;">Tax Type</div>
<div class="a " style="left:884px;top:156px;width:146px;height:12px;background:#e8e8e8;box-sizing:border-box;border:1px solid #d0d0d0;"></div>
<div class="t" style="left:887.6px;top:157.7px;color:#333;font-size:6.4px;letter-spacing:-0.25px;">Sales Tax</div>
<svg class="a" style="left:1019.8px;top:160.6px" width="4" height="3" viewBox="0 0 4 3"><path d="M0.3 0.4l1.7 1.8 1.7-1.8" stroke="#707070" stroke-width="0.9" fill="none"/></svg>
<div class="t" style="left:885px;top:170.5px;color:#333;font-size:6.4px;">All</div>
<div class="t" style="left:915.2px;top:170.5px;color:#3a3aee;font-size:6.4px;">Material</div>
<div class="t" style="left:941.9px;top:170.5px;color:#2e9a30;font-size:6.4px;">Labor</div>
<div class="t" style="left:826px;top:182.0px;color:#333;font-size:6.4px;">Cost</div>
<div class="t" style="left:885.3px;top:182.0px;color:#8a8a8a;font-size:6.4px;letter-spacing:-0.15px;">$4,985.04</div>
<div class="t" style="left:916px;top:182.0px;color:#3a3aee;font-size:6.4px;letter-spacing:-0.15px;">$0.00</div>
<div class="t" style="left:942.6px;top:182.0px;color:#2e9a30;font-size:6.4px;letter-spacing:-0.15px;">$4,985.04</div>
<div class="t" style="left:826px;top:193.8px;color:#333;font-size:6.4px;">Sales</div>
<div class="t" style="left:885.3px;top:193.8px;color:#222;font-size:6.4px;letter-spacing:-0.15px;">$6,646.32</div>
<div class="t" style="left:916px;top:193.8px;color:#3a3aee;font-size:6.4px;letter-spacing:-0.15px;">$0.00</div>
<div class="t" style="left:942.6px;top:193.8px;color:#2e9a30;font-size:6.4px;letter-spacing:-0.15px;">$6,646.32</div>
<div class="t" style="left:826px;top:205.6px;color:#333;font-size:6.4px;">Profit</div>
<div class="t" style="left:885.3px;top:205.6px;color:#8a8a8a;font-size:6.4px;letter-spacing:-0.15px;">$1,661.28</div>
<div class="t" style="left:916px;top:205.6px;color:#3a3aee;font-size:6.4px;letter-spacing:-0.15px;">$0.00</div>
<div class="t" style="left:942.6px;top:205.6px;color:#2e9a30;font-size:6.4px;letter-spacing:-0.15px;">$1,661.28</div>
<div class="t" style="left:826px;top:217.4px;color:#333;font-size:6.4px;">Margin</div>
<div class="t" style="left:885.3px;top:217.4px;color:#8a8a8a;font-size:6.4px;letter-spacing:-0.15px;">25.0%</div>
<div class="t" style="left:916px;top:217.4px;color:#3a3aee;font-size:6.4px;letter-spacing:-0.15px;">0.0%</div>
<div class="t" style="left:942.6px;top:217.4px;color:#2e9a30;font-size:6.4px;letter-spacing:-0.15px;">25.0%</div>
<div class="t" style="left:826px;top:229.2px;color:#333;font-size:6.4px;">Markup</div>
<div class="t" style="left:885.3px;top:229.2px;color:#8a8a8a;font-size:6.4px;letter-spacing:-0.15px;">33.3%</div>
<div class="t" style="left:916px;top:229.2px;color:#3a3aee;font-size:6.4px;letter-spacing:-0.15px;">0.0%</div>
<div class="t" style="left:942.6px;top:229.2px;color:#2e9a30;font-size:6.4px;letter-spacing:-0.15px;">33.3%</div>
<div class="t" style="left:826px;top:241.3px;color:#333;font-size:6.4px;">Tax</div>
<div class="t" style="left:885px;top:241.3px;color:#333;font-size:6.4px;">$0.00</div>
<div class="t" style="left:826px;top:253.5px;color:#333;font-size:6.4px;">Freight</div>
<div class="a " style="left:884px;top:253px;width:89px;height:9.5px;background:#fff;box-sizing:border-box;border:1px solid #d0d0d0;"></div>
<svg class="a" style="left:976px;top:253.9px" width="8" height="8" viewBox="0 0 8 8"><rect x="0.5" y="0.5" width="7" height="7" fill="#fff" stroke="#8c8c8c" stroke-width="0.9"/></svg>
<div class="t" style="left:987px;top:252.7px;color:#333;font-size:6.4px;">Discountable</div>
<div class="t" style="left:826px;top:265.6px;color:#333;font-size:6.4px;">Discount</div>
<svg class="a" style="left:871.5px;top:266px" width="9" height="8" viewBox="0 0 9 8"><rect x="0" y="3" width="5.7" height="4.6" fill="#777"/><path d="M4.5 3V1.8a1.6 1.6 0 0 1 3.2 0v0.8" stroke="#8a8a8a" stroke-width="0.8" fill="none"/></svg>
<div class="a " style="left:884px;top:265px;width:89px;height:9px;background:#fff;box-sizing:border-box;border:1px solid #d0d0d0;"></div>
<div class="t" style="left:886px;top:264.7px;color:#333;font-size:6.4px;">0%</div>
<svg class="a" style="left:976px;top:265.4px" width="8" height="8" viewBox="0 0 8 8"><rect x="0.5" y="0.5" width="7" height="7" fill="#f2f2f2" stroke="#8c8c8c" stroke-width="0.9"/><path d="M1.6 3.9l1.9 2.1 3.1-4.6" stroke="#1a1a1a" stroke-width="1.25" fill="none"/></svg>
<div class="t" style="left:987px;top:264.5px;color:#333;font-size:6.4px;">Show in Total</div>
<svg class="a" style="left:872px;top:277px" width="8" height="8" viewBox="0 0 8 8"><rect x="0.8" y="3.3" width="5.6" height="4.6" fill="#3173b9"/><path d="M2 3.5V2.3a1.6 1.6 0 0 1 3.2 0v1.2" stroke="#3173b9" stroke-width="0.9" fill="none"/></svg>
<div class="a " style="left:884px;top:276.3px;width:146px;height:9.0px;background:#fff;box-sizing:border-box;border:1px solid #d0d0d0;"></div>
<div class="t" style="left:886px;top:276.0px;color:#333;font-size:6.4px;">0</div>
<div class="t" style="left:826px;top:288.0px;color:#333;font-size:6.4px;">Deposit</div>
<svg class="a" style="left:871.5px;top:288.4px" width="9" height="8" viewBox="0 0 9 8"><rect x="0" y="3" width="5.7" height="4.6" fill="#777"/><path d="M4.5 3V1.8a1.6 1.6 0 0 1 3.2 0v0.8" stroke="#8a8a8a" stroke-width="0.8" fill="none"/></svg>
<div class="a " style="left:884px;top:287.4px;width:89px;height:9.0px;background:#fff;box-sizing:border-box;border:1px solid #d0d0d0;"></div>
<div class="t" style="left:886px;top:287.09999999999997px;color:#333;font-size:6.4px;">0%</div>
<svg class="a" style="left:976px;top:287.79999999999995px" width="8" height="8" viewBox="0 0 8 8"><rect x="0.5" y="0.5" width="7" height="7" fill="#f2f2f2" stroke="#8c8c8c" stroke-width="0.9"/><path d="M1.6 3.9l1.9 2.1 3.1-4.6" stroke="#1a1a1a" stroke-width="1.25" fill="none"/></svg>
<div class="t" style="left:987px;top:286.9px;color:#333;font-size:6.4px;">Show in Total</div>
<svg class="a" style="left:872px;top:299.4px" width="8" height="8" viewBox="0 0 8 8"><rect x="0.8" y="3.3" width="5.6" height="4.6" fill="#3173b9"/><path d="M2 3.5V2.3a1.6 1.6 0 0 1 3.2 0v1.2" stroke="#3173b9" stroke-width="0.9" fill="none"/></svg>
<div class="a " style="left:884px;top:298.7px;width:146px;height:9.0px;background:#fff;box-sizing:border-box;border:1px solid #d0d0d0;"></div>
<div class="t" style="left:886px;top:298.4px;color:#333;font-size:6.4px;">0</div>
<div class="t" style="left:826px;top:310.9px;color:#333;font-size:6.4px;">Total</div>
<div class="t" style="left:885px;top:310.7px;color:#333;font-size:6.4px;letter-spacing:-0.15px;">$6,646.32</div>
<div class="t" style="left:826px;top:322.9px;color:#333;font-size:6.4px;">Terms &amp; Conditions</div>
<svg class="a" style="left:891px;top:324.9px" width="5" height="3" viewBox="0 0 5 3"><path d="M0 0h5L2.5 3z" fill="#111"/></svg>
<div class="a " style="left:825px;top:341px;width:205px;height:162px;background:#fff;box-sizing:border-box;border:1px solid #d8d8d8;"></div>
<div class="a " style="left:824px;top:516px;width:200px;height:13px;background:#f3f3f3;"></div>
<div class="a " style="left:824px;top:512px;width:200px;height:4px;background:#efefef;"></div>
<div class="a " style="left:824px;top:512px;width:200px;height:1px;background:#e2e2e2;"></div>
<div class="a " style="left:824px;top:515px;width:200px;height:1px;background:#e4e8ec;"></div>
<div class="a " style="left:921.0px;top:513.5px;width:1px;height:1px;background:#8a8a8a;"></div>
<div class="a " style="left:922.8px;top:513.5px;width:1px;height:1px;background:#8a8a8a;"></div>
<div class="a " style="left:924.6px;top:513.5px;width:1px;height:1px;background:#8a8a8a;"></div>
<div class="a " style="left:926.4px;top:513.5px;width:1px;height:1px;background:#8a8a8a;"></div>
<div class="a " style="left:928.2px;top:513.5px;width:1px;height:1px;background:#8a8a8a;"></div>
<div class="a " style="left:930.0px;top:513.5px;width:1px;height:1px;background:#8a8a8a;"></div>
<div class="a " style="left:824px;top:516px;width:18px;height:13px;background:#ecf8f9;"></div>
<svg class="a" style="left:826.5px;top:517.5px" width="13" height="12" viewBox="0 0 13 12"><rect x="0.5" y="1.8" width="12" height="10" fill="#fff" stroke="#999" stroke-width="0.8"/><rect x="0.3" y="0.5" width="5.2" height="2" fill="#2f6fbf"/><path d="M3.5 2v10M6.5 2v10M9.5 2v10M0.5 4.5h12M0.5 7h12M0.5 9.5h12" stroke="#d0d0d0" stroke-width="0.6"/></svg>
</body></html>
